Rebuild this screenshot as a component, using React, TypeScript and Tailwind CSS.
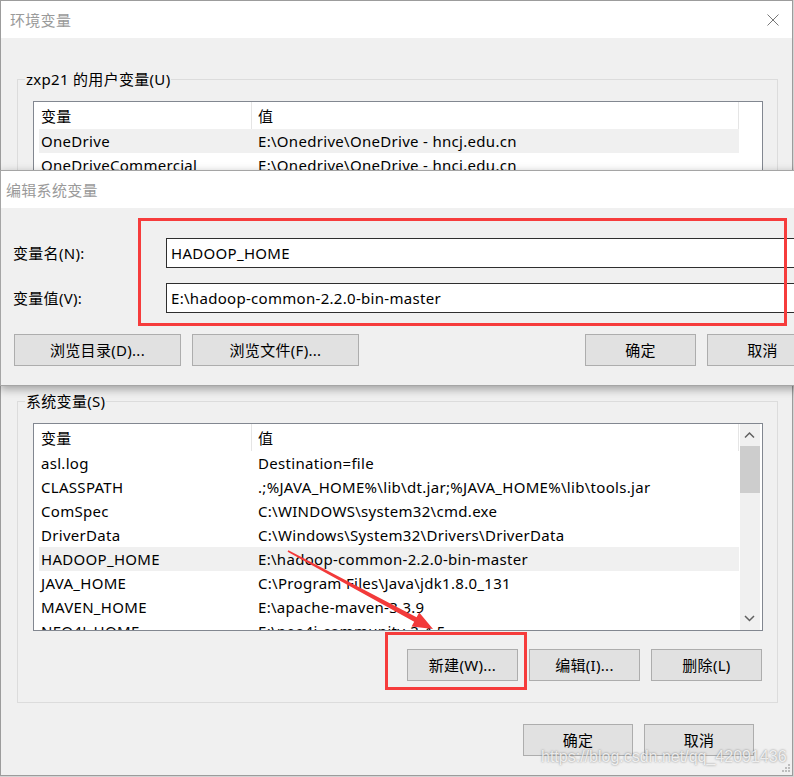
import React from "react";

type Row = { n: string; v: string; hl?: boolean };

const userRows: Row[] = [
  { n: "OneDrive", v: "E:\\Onedrive\\OneDrive - hncj.edu.cn", hl: true },
  { n: "OneDriveCommercial", v: "E:\\Onedrive\\OneDrive - hncj.edu.cn" },
  { n: "Path", v: "C:\\Users\\zxp21\\AppData\\Local\\Microsoft\\WindowsApps;" },
  { n: "TEMP", v: "C:\\Users\\zxp21\\AppData\\Local\\Temp" },
  { n: "TMP", v: "C:\\Users\\zxp21\\AppData\\Local\\Temp" },
];

const sysRows: Row[] = [
  { n: "asl.log", v: "Destination=file" },
  { n: "CLASSPATH", v: ".;%JAVA_HOME%\\lib\\dt.jar;%JAVA_HOME%\\lib\\tools.jar" },
  { n: "ComSpec", v: "C:\\WINDOWS\\system32\\cmd.exe" },
  { n: "DriverData", v: "C:\\Windows\\System32\\Drivers\\DriverData" },
  { n: "HADOOP_HOME", v: "E:\\hadoop-common-2.2.0-bin-master", hl: true },
  { n: "JAVA_HOME", v: "C:\\Program Files\\Java\\jdk1.8.0_131" },
  { n: "MAVEN_HOME", v: "E:\\apache-maven-3.3.9" },
  { n: "NEO4J_HOME", v: "E:\\neo4j-community-3.4.5" },
];

function Btn({ children, className }: { children: React.ReactNode; className: string }) {
  return (
    <div
      className={
        "h-[32px] flex items-center justify-center bg-[#e1e1e1] border border-[#adadad] text-black shrink-0 " +
        className
      }
    >
      {children}
    </div>
  );
}

function ListBox({ rows, scroll }: { rows: Row[]; scroll: boolean }) {
  return (
    <div className="ml-[15px] mr-[14px] mt-[12px] h-[208px] border border-[#828790] bg-white flex overflow-hidden">
      <div className="pl-[5px] w-[705px] shrink-0 flex flex-col">
        <div className="h-[27px] grid grid-cols-[212px_488px] shrink-0">
          <div className="pl-[2px] flex items-center">变量</div>
          <div className="pl-[6px] flex items-center border-l border-r border-[#e5e5e5]">值</div>
        </div>
        {rows.map((r) => (
          <div
            key={r.n}
            className={
              "h-[24px] grid grid-cols-[212px_488px] items-center shrink-0 whitespace-nowrap " +
              (r.hl ? "bg-[#f0f0f0]" : "")
            }
          >
            <div className="pl-[2px] overflow-hidden">{r.n}</div>
            <div className="pl-[7px] overflow-hidden">{r.v}</div>
          </div>
        ))}
      </div>
      {scroll ? (
        <div className="ml-[1px] w-[20px] shrink-0 bg-[#f0f0f0] flex flex-col">
          <div className="h-[22px] shrink-0">
            <svg width="20" height="22" viewBox="0 0 20 22">
              <path d="M5 13.5 L9.5 9 L14 13.5" fill="none" stroke="#606060" strokeWidth="1.5" />
            </svg>
          </div>
          <div className="h-[47px] shrink-0 bg-[#cdcdcd]" />
          <div className="flex-1" />
          <div className="h-[22px] shrink-0">
            <svg width="20" height="22" viewBox="0 0 20 22">
              <path d="M5 8 L9.5 12.5 L14 8" fill="none" stroke="#606060" strokeWidth="1.5" />
            </svg>
          </div>
        </div>
      ) : null}
    </div>
  );
}

export default function App() {
  return (
    <div className="relative w-[794px] h-[777px] overflow-hidden bg-[#d4d4d4] font-['Noto_Sans','Noto_Sans_CJK_SC',sans-serif] text-[15px] leading-[20px] tracking-[0.3px] text-black">
      {/* main window */}
      <div className="w-[793px] h-[776px] border border-[#9c9c9c] bg-[#f0f0f0] flex flex-col">
        <div className="h-[37px] shrink-0 bg-white flex items-center justify-between pl-[9px] pr-[13px]">
          <span className="text-[#9a9a9a]">环境变量</span>
          <svg width="12" height="12" viewBox="0 0 12 12">
            <path d="M0.5 0.5 L11.5 11.5 M11.5 0.5 L0.5 11.5" stroke="#777" strokeWidth="1" />
          </svg>
        </div>

        {/* user variables */}
        <div className="ml-[16px] mr-[14px] mt-[41px] h-[300px] border border-[#dcdcdc] flex flex-col shrink-0">
          <div className="-mt-[11px] ml-[7px] px-[1px] w-fit bg-[#f0f0f0]">zxp21 的用户变量(U)</div>
          <ListBox rows={userRows} scroll={false} />
        </div>

        {/* system variables */}
        <div className="ml-[16px] mr-[14px] mt-[22px] border border-[#dcdcdc] flex flex-col shrink-0 pb-[21px]">
          <div className="-mt-[11px] ml-[7px] px-[1px] w-fit bg-[#f0f0f0]">系统变量(S)</div>
          <ListBox rows={sysRows} scroll={true} />
          <div className="mt-[18px] mr-[15px] flex justify-end gap-[11px]">
            <Btn className="w-[111px]">新建(W)...</Btn>
            <Btn className="w-[111px]">编辑(I)...</Btn>
            <Btn className="w-[111px]">删除(L)</Btn>
          </div>
        </div>

        <div className="mt-[21px] mr-[38px] flex justify-end gap-[11px]">
          <Btn className="w-[110px]">确定</Btn>
          <Btn className="w-[110px]">取消</Btn>
        </div>
      </div>

      {/* edit dialog */}
      <div className="absolute left-0 top-[170px] w-[832px] border border-[#a5a5a5] bg-[#f0f0f0] shadow-[0_3px_9px_rgba(0,0,0,0.35)] flex flex-col">
        <div className="h-[37px] bg-white flex items-center pl-[5px]">
          <span className="text-[#9a9a9a]">编辑系统变量</span>
        </div>
        <div className="h-[177px] pt-[30px] flex flex-col">
          <div className="flex items-center">
            <div className="w-[165px] pl-[12px] shrink-0">变量名(N):</div>
            <div className="flex-1 mr-[13px] h-[30px] border border-[#2e2e2e] bg-white pl-[4px] flex items-center">
              HADOOP_HOME
            </div>
          </div>
          <div className="flex items-center mt-[15px]">
            <div className="w-[165px] pl-[12px] shrink-0">变量值(V):</div>
            <div className="flex-1 mr-[13px] h-[30px] border border-[#2e2e2e] bg-white pl-[4px] flex items-center">
              E:\hadoop-common-2.2.0-bin-master
            </div>
          </div>
          <div className="mt-[21px] px-[13px] flex">
            <Btn className="w-[167px]">浏览目录(D)...</Btn>
            <Btn className="w-[167px] ml-[11px]">浏览文件(F)...</Btn>
            <div className="flex-1" />
            <Btn className="w-[111px]">确定</Btn>
            <Btn className="w-[111px] ml-[11px]">取消</Btn>
          </div>
        </div>
      </div>

      {/* annotations */}
      <div className="absolute left-[138px] top-[218px] w-[649px] h-[108px] border-[3px] border-[#f63c3c]" />
      <div className="absolute left-[385px] top-[632px] w-[142px] h-[58px] border-[3px] border-[#f63c3c]" />
      <svg className="absolute left-0 top-0 pointer-events-none" width="794" height="777" viewBox="0 0 794 777">
        <polygon
          points="288.4,550.3 416.6,617.3 419.2,612.5 433,629 411.6,626.5 414.2,621.7 287.6,551.7"
          fill="#f23a3a"
        />
        <g fill="#bdbdbd">
          <rect x="788" y="764" width="2" height="2" />
          <rect x="785" y="767" width="2" height="2" />
          <rect x="788" y="767" width="2" height="2" />
          <rect x="782" y="770" width="2" height="2" />
          <rect x="785" y="770" width="2" height="2" />
          <rect x="788" y="770" width="2" height="2" />
        </g>
      </svg>

      <div className="absolute left-[541px] top-[748px] font-['Liberation_Sans',Arial,sans-serif] text-[16px] leading-[18px] tracking-normal text-white/80 [text-shadow:0_0_2px_rgba(70,70,70,0.7)] whitespace-nowrap pointer-events-none">
        https://blog.csdn.net/qq_42091436
      </div>
    </div>
  );
}
